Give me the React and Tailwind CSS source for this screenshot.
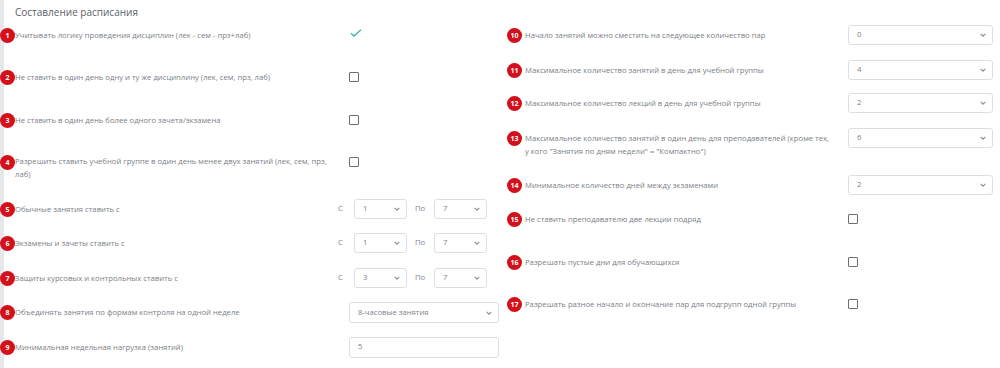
import React from 'react';

const Badge = ({ n }) => (
  <span className="flex h-[15px] w-[15px] shrink-0 items-center justify-center rounded-full bg-[#d4101b] text-[7px] font-bold leading-none text-white">
    {n}
  </span>
);

const Chevron = () => (
  <svg width="6" height="4" viewBox="0 0 6 4" fill="none">
    <path d="M0.7 0.8L3 3.1L5.3 0.8" stroke="#8a8f95" strokeWidth="1.2" />
  </svg>
);

const Select = ({ value, className }) => (
  <div className={`flex items-center justify-between rounded-[3px] border border-[#dcdfe3] bg-white pl-[8px] pr-[6px] text-[7.7px] text-[#7d8288] ${className}`}>
    <span>{value}</span>
    <Chevron />
  </div>
);

const Checkbox = () => <div className="h-[10px] w-[10px] rounded-[1px] border-[1.5px] border-[#6e6e6e] bg-white" />;

const Check = () => (
  <svg width="12" height="8" viewBox="0 0 12 8" fill="none">
    <path d="M1 4.2L4 7L11 0.8" stroke="#3fb3a3" strokeWidth="1.3" />
  </svg>
);

const Label = ({ children, className }) => (
  <span className={`text-[7.7px] leading-[13px] text-[#7b8087] ${className}`}>{children}</span>
);

const Range = ({ from, to }) => (
  <div className="flex items-center text-[7.7px] text-[#80858b]">
    <span className="w-[16px]">С</span>
    <Select value={from} className="h-[20px] w-[53px]" />
    <span className="ml-[8px] w-[19px]">По</span>
    <Select value={to} className="h-[20px] w-[53px]" />
  </div>
);

export default function App() {
  return (
    <div className="h-[368px] w-[1000px] overflow-hidden bg-white">
      <div className="h-full border-l-[4px] border-[#e4e8eb] font-['Open_Sans',sans-serif]">
        <div className="-ml-[4px] flex">
          {/* left column */}
          <div className="flex w-[507px] flex-col">
            <div className="flex h-[25px] items-center pl-[15px] text-[10px] text-[#5b6168]">Составление расписания</div>

            <div className="flex h-[20px] items-center">
              <Badge n="1" />
              <Label className="w-[323px]">Учитывать логику проведения дисциплин (лек - сем - прз+лаб)</Label>
              <div className="ml-[12px] -mt-[4px]"><Check /></div>
            </div>

            <div className="mt-[22px] flex h-[20px] items-center">
              <Badge n="2" />
              <Label className="w-[323px]">Не ставить в один день одну и ту же дисциплину (лек, сем, прз, лаб)</Label>
              <div className="ml-[11px]"><Checkbox /></div>
            </div>

            <div className="mt-[23px] flex h-[20px] items-center">
              <Badge n="3" />
              <Label className="w-[323px]">Не ставить в один день более одного зачета/экзамена</Label>
              <div className="ml-[11px]"><Checkbox /></div>
            </div>

            <div className="mt-[22px] flex h-[30px] items-start">
              <div className="mt-[3px]"><Badge n="4" /></div>
              <Label className="w-[323px] pr-[4px] pt-[3px]">Разрешить ставить учебной группе в один день менее двух занятий (лек, сем, прз, лаб)</Label>
              <div className="ml-[11px] mt-[5px]"><Checkbox /></div>
            </div>

            <div className="mt-[17px] flex h-[20px] items-center">
              <Badge n="5" />
              <Label className="w-[323px]">Обычные занятия ставить с</Label>
              <Range from="1" to="7" />
            </div>

            <div className="mt-[14px] flex h-[20px] items-center">
              <Badge n="6" />
              <Label className="w-[323px]">Экзамены и зачеты ставить с</Label>
              <Range from="1" to="7" />
            </div>

            <div className="mt-[15px] flex h-[20px] items-center">
              <Badge n="7" />
              <Label className="w-[323px]">Защиты курсовых и контрольных ставить с</Label>
              <Range from="3" to="7" />
            </div>

            <div className="mt-[14px] flex h-[21px] items-center">
              <Badge n="8" />
              <Label className="w-[323px]">Объединять занятия по формам контроля на одной неделе</Label>
              <Select value="8-часовые занятия" className="ml-[11px] h-[21px] w-[150px]" />
            </div>

            <div className="mt-[14px] flex h-[20px] items-center">
              <Badge n="9" />
              <Label className="w-[323px]">Минимальная недельная нагрузка (занятий)</Label>
              <div className="ml-[11px] flex h-[21px] w-[150px] items-center rounded-[3px] border border-[#dcdfe3] pl-[8px] text-[7.7px] text-[#7d8288]">5</div>
            </div>
          </div>

          {/* right column */}
          <div className="flex flex-1 flex-col pt-[25px]">
            <div className="flex h-[20px] items-center">
              <Badge n="10" />
              <Label className="ml-[3px] w-[323px]">Начало занятий можно сместить на следующее количество пар</Label>
              <Select value="0" className="h-[20px] w-[145px]" />
            </div>

            <div className="mt-[15px] flex h-[20px] items-center">
              <Badge n="11" />
              <Label className="ml-[3px] w-[323px]">Максимальное количество занятий в день для учебной группы</Label>
              <Select value="4" className="h-[20px] w-[145px]" />
            </div>

            <div className="mt-[13px] flex h-[20px] items-center">
              <Badge n="12" />
              <Label className="ml-[3px] w-[323px]">Максимальное количество лекций в день для учебной группы</Label>
              <Select value="2" className="h-[20px] w-[145px]" />
            </div>

            <div className="mt-[15px] flex h-[30px] items-start">
              <div className="mt-[3px]"><Badge n="13" /></div>
              <Label className="ml-[3px] w-[323px] pr-[17px] pt-[4px]">Максимальное количество занятий в один день для преподавателей (кроме тех, у кого "Занятия по дням недели" = "Компактно")</Label>
              <Select value="6" className="h-[20px] w-[145px]" />
            </div>

            <div className="mt-[17px] flex h-[20px] items-center">
              <Badge n="14" />
              <Label className="ml-[3px] w-[323px]">Минимальное количество дней между экзаменами</Label>
              <Select value="2" className="h-[20px] w-[145px]" />
            </div>

            <div className="mt-[14px] flex h-[20px] items-center">
              <Badge n="15" />
              <Label className="ml-[3px] w-[323px]">Не ставить преподавателю две лекции подряд</Label>
              <Checkbox />
            </div>

            <div className="mt-[23px] flex h-[20px] items-center">
              <Badge n="16" />
              <Label className="ml-[3px] w-[323px]">Разрешать пустые дни для обучающихся</Label>
              <Checkbox />
            </div>

            <div className="mt-[22px] flex h-[20px] items-center">
              <Badge n="17" />
              <Label className="ml-[3px] w-[323px]">Разрешать разное начало и окончание пар для подгрупп одной группы</Label>
              <Checkbox />
            </div>
          </div>
        </div>
      </div>
    </div>
  );
}
